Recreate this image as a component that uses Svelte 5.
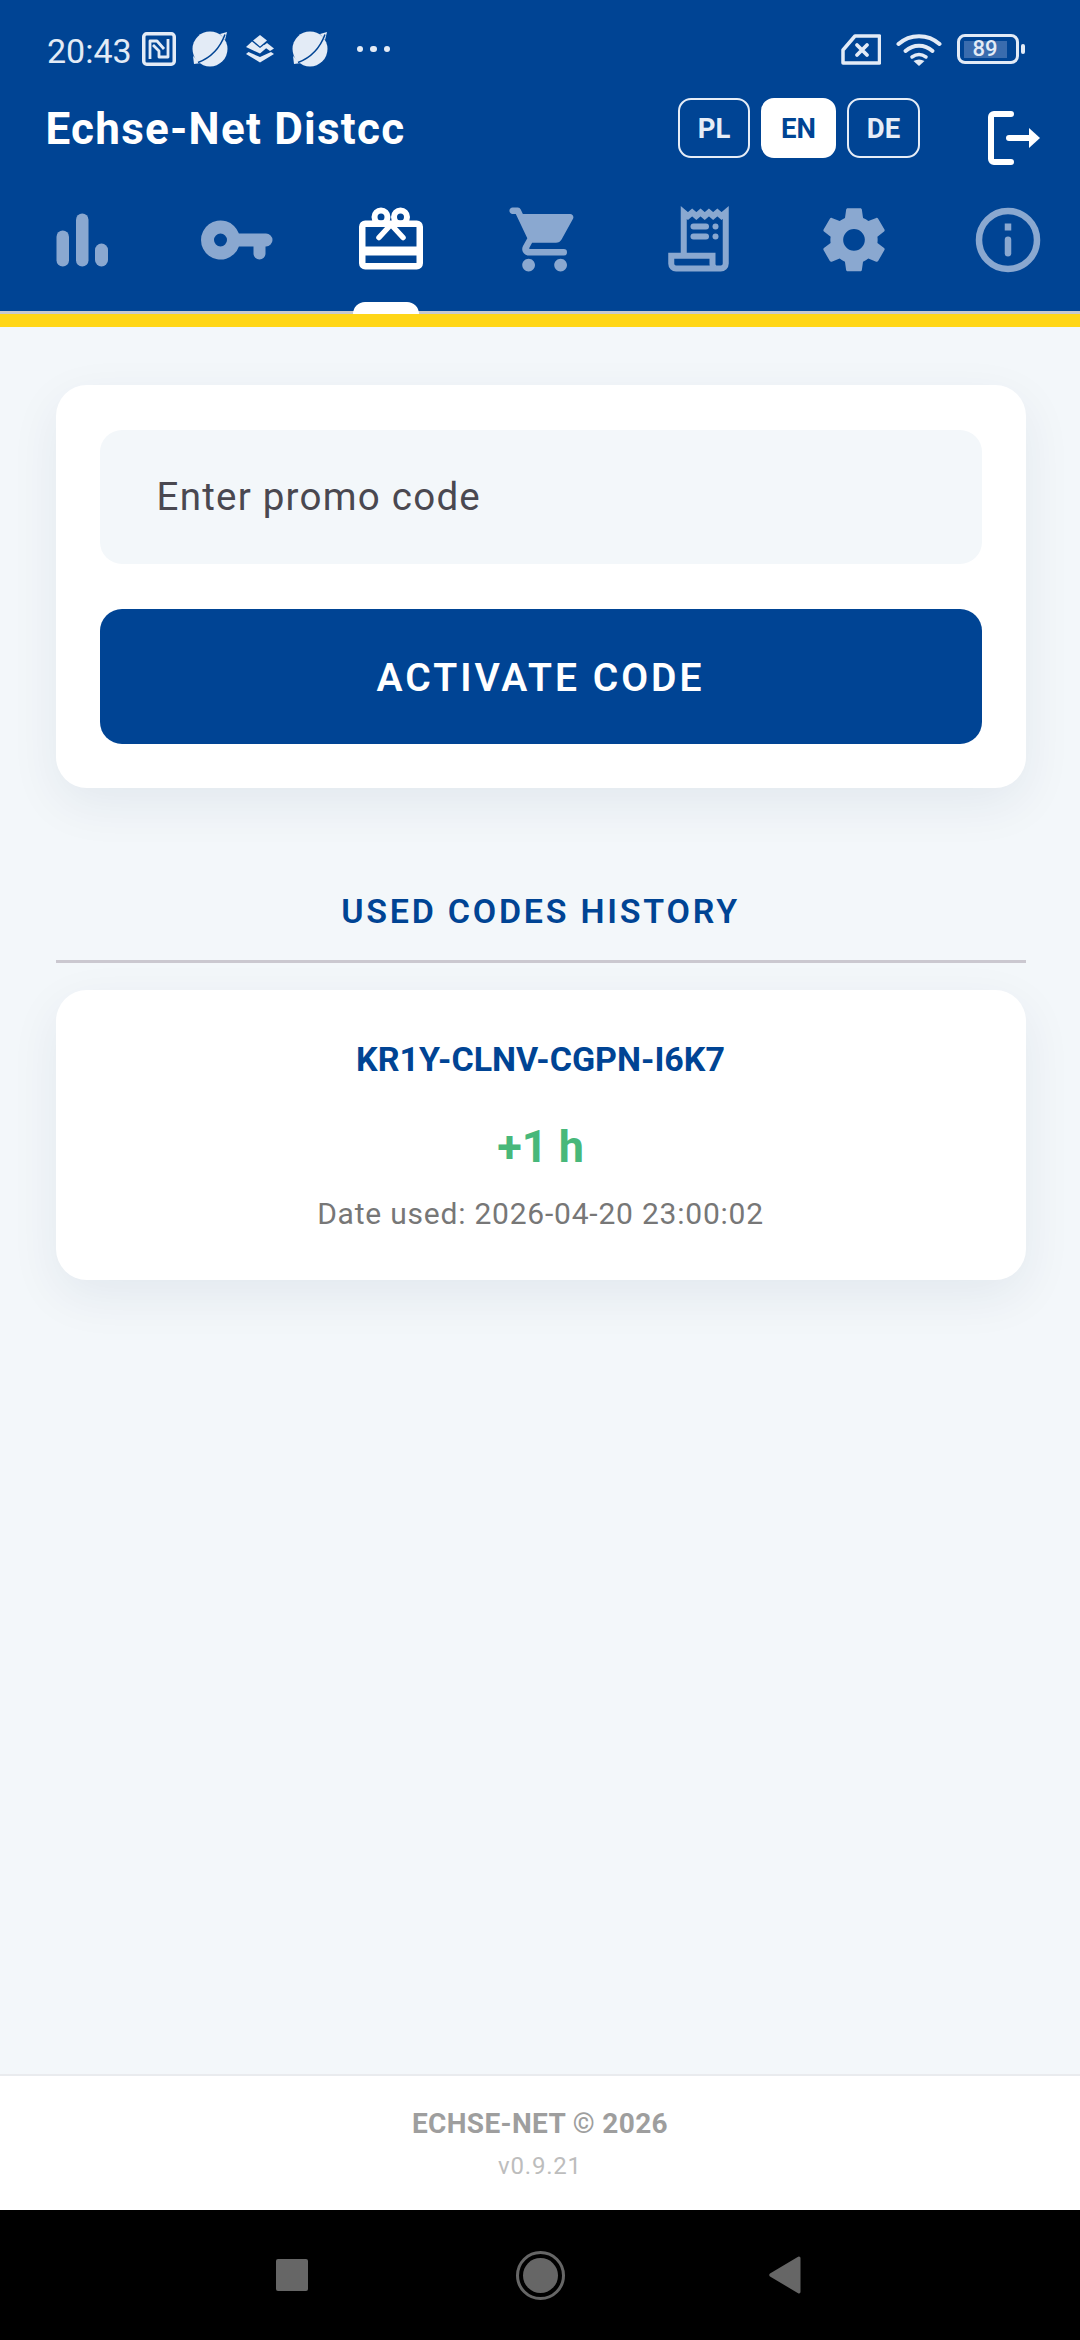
<script>
  const tabs = ['stats', 'key', 'gift', 'cart', 'receipt', 'gear', 'info'];
</script>

<div class="screen">
  <header class="top">
    <div class="status">
      <div class="status-left">
        <span class="clock">20:43</span>
        <svg class="ic nfc" viewBox="0 0 34 34"><rect x="1.750" y="1.750" width="30.500" height="30.500" rx="3" fill="none" stroke="currentColor" stroke-width="3.500"/><path d="M8 27V9h7l7 8M26 7v18h-9v-6l-6-6" fill="none" stroke="currentColor" stroke-width="2.800" stroke-linejoin="round"/></svg>
        <svg class="ic planet" viewBox="0 0 36 36"><circle cx="18" cy="18" r="17.500" fill="currentColor"/><path d="M28 3l7-2-2 8zM1 25l1 8 7-1z" fill="currentColor"/><path d="M6 31.500C18 27 28 17 33 3.500" stroke="#004494" stroke-width="1.500" fill="none"/></svg>
        <svg class="ic stack" viewBox="0 0 28 28"><path d="M14 0l7 5.500-7 6-7-6zM6 6.500l8 6.500 4-3 3 2.500-7 6-14-6.500zM0 19l2.500-2L14 22l11-5 3 2-14 8.500z" fill="currentColor"/><path d="M21 8l7 5.500-4 2.500-7-5z" fill="currentColor"/></svg>
        <svg class="ic planet second" viewBox="0 0 36 36"><circle cx="18" cy="18" r="17.500" fill="currentColor"/><path d="M28 3l7-2-2 8zM1 25l1 8 7-1z" fill="currentColor"/><path d="M6 31.500C18 27 28 17 33 3.500" stroke="#004494" stroke-width="1.500" fill="none"/></svg>
        <span class="dots"><i></i><i></i><i></i></span>
      </div>
      <div class="status-right">
        <svg class="sim" viewBox="0 0 40 31"><path d="M2 16 14 2h24.500v27H2z" fill="none" stroke="currentColor" stroke-width="3.500" stroke-linejoin="round"/><path d="M16 11l10 10M26 11 16 21" stroke="currentColor" stroke-width="3.800" stroke-linecap="round"/></svg>
        <svg class="wifi" viewBox="0 0 46 34"><path d="M2.500 12C14 1.500 32 1.500 43.500 12" fill="none" stroke="currentColor" stroke-width="4" stroke-linecap="round"/><path d="M9.500 19c8-7 19-7 27 0" fill="none" stroke="currentColor" stroke-width="4" stroke-linecap="round"/><path d="M16 25c5-3.500 9-3.500 14 0" fill="none" stroke="currentColor" stroke-width="3.500" stroke-linecap="round"/><path d="M23 34l-5.500-5q5.500-3 11 0z" fill="currentColor"/></svg>
        <div class="battery"><div class="cell"><span class="level">89</span></div><i class="nub"></i></div>
      </div>
    </div>

    <div class="titlebar">
      <h1>Echse-Net Distcc</h1>
      <div class="actions">
        <div class="langs">
          <button class="lang">PL</button>
          <button class="lang on">EN</button>
          <button class="lang">DE</button>
        </div>
        <svg class="logout" viewBox="0 0 52 54"><path d="M23 3H6a3 3 0 0 0-3 3v42a3 3 0 0 0 3 3h17" fill="none" stroke="#fff" stroke-width="6" stroke-linecap="round"/><path d="M21 27h21" stroke="#fff" stroke-width="6" stroke-linecap="round"/><path d="M41 17l11 10-11 10z" fill="#fff"/></svg>
      </div>
    </div>

    <nav class="tabs">
      {#each tabs as t}
        <div class="tab" class:active={t === 'gift'}>
          {#if t === 'stats'}
            <svg viewBox="0 0 64 64"><g fill="currentColor"><rect x="6.500" y="23" width="12.500" height="36" rx="6.250"/><rect x="26" y="6" width="12.500" height="53" rx="6.250"/><rect x="45" y="36" width="13" height="23" rx="6.500"/></g></svg>
          {:else if t === 'key'}
            <svg viewBox="0 0 64 64"><path fill="currentColor" fill-rule="evenodd" d="M33.900 26H61a6.500 6.500 0 0 1 0 13h-.5v7a6 6 0 0 1-12 0v-7H33.900A19.500 19.500 0 1 1 33.900 26zM15.500 26a6.500 6.500 0 1 0 0 13 6.500 6.500 0 0 0 0-13z"/></svg>
          {:else if t === 'gift'}
            <svg viewBox="0 0 64 64"><g fill="none" stroke="currentColor"><rect x="3.250" y="16.250" width="57.500" height="42.500" rx="3" stroke-width="6.500"/><path d="M3 43.500h58" stroke-width="9"/><circle cx="22" cy="9.500" r="6.500" stroke-width="6"/><circle cx="41.500" cy="9.500" r="6.500" stroke-width="6"/><path d="M32 17 20 30M32 17 44 30" stroke-width="5.500" stroke-linecap="round"/></g></svg>
          {:else if t === 'cart'}
            <svg viewBox="0 0 64 64"><path transform="translate(-6.800 -6.400) scale(3.200)" fill="currentColor" d="M7 18c-1.100 0-1.990.9-1.990 2S5.900 22 7 22s2-.9 2-2-.9-2-2-2zM1 3c0 .55.45 1 1 1h1l3.600 7.590-1.350 2.450c-.16.28-.25.61-.25.96 0 1.100.9 2 2 2h11a1 1 0 0 0 0-2H7.420c-.14 0-.25-.11-.25-.25l.03-.12.9-1.630h7.450c.75 0 1.410-.41 1.750-1.030l3.580-6.470c.08-.14.12-.31.12-.48 0-.55-.45-1-1-1H5.210l-.67-1.430A1 1 0 0 0 3.640 2H2c-.55 0-1 .45-1 1zm16 15c-1.100 0-1.990.9-1.990 2s.89 2 1.990 2 2-.9 2-2-.9-2-2-2z"/></svg>
          {:else if t === 'receipt'}
            <svg viewBox="0 0 64 64"><path fill="none" stroke="currentColor" stroke-width="6" stroke-linejoin="miter" d="M15.750 46V5l4.200 3.500 4.200-3.500 4.200 3.500 4.200-3.500 4.200 3.500 4.200-3.500 4.200 3.500 4.200-3.500 4.200 3.500 4.200-3.500V56a5 5 0 0 1-5 5H8a4.750 4.750 0 0 1-4.750-4.750V48.250H44.500V56a4.500 4.500 0 0 0 4.500 5"/><g fill="currentColor"><rect x="22.500" y="16" width="18.500" height="6" rx="3"/><rect x="22.500" y="26" width="18.500" height="6" rx="3"/><circle cx="47.500" cy="19" r="3"/><circle cx="47.500" cy="29" r="3"/></g></svg>
          {:else if t === 'gear'}
            <svg viewBox="2.600 2 18.800 19.800"><path fill="currentColor" fill-rule="evenodd" d="M19.140 12.940c.04-.3.06-.61.06-.94 0-.32-.02-.64-.07-.94l2.030-1.580c.18-.14.23-.41.12-.61l-1.920-3.320c-.12-.22-.37-.29-.59-.22l-2.390.96c-.5-.38-1.030-.7-1.620-.94l-.36-2.540c-.04-.24-.24-.41-.48-.41h-3.840c-.24 0-.43.17-.47.41l-.36 2.540c-.59.24-1.130.57-1.620.94l-2.390-.96c-.22-.08-.47 0-.59.22L2.740 8.870c-.12.21-.08.47.12.61l2.030 1.580c-.05.3-.09.63-.09.94s.02.64.07.94l-2.030 1.580c-.18.14-.23.41-.12.61l1.920 3.320c.12.22.37.29.59.22l2.390-.96c.5.38 1.030.7 1.620.94l.36 2.540c.05.24.24.41.48.41h3.840c.24 0 .44-.17.47-.41l.36-2.540c.59-.24 1.130-.56 1.620-.94l2.390.96c.22.08.47 0 .59-.22l1.920-3.320c.12-.22.07-.47-.12-.61l-2.010-1.580zM12 15.300a3.300 3.300 0 1 1 0-6.600 3.300 3.300 0 0 1 0 6.600z"/></svg>
          {:else}
            <svg viewBox="0 0 64 64"><circle cx="32" cy="32.500" r="29" fill="none" stroke="currentColor" stroke-width="6.500"/><rect x="28.750" y="16" width="6.500" height="7" fill="currentColor"/><rect x="28.750" y="29" width="6.500" height="20" rx="3.250" fill="currentColor"/></svg>
          {/if}
          {#if t === 'gift'}<span class="pill"></span>{/if}
        </div>
      {/each}
    </nav>
  </header>
  <div class="stripe"></div>

  <main class="content">
    <section class="card promo">
      <div class="field">Enter promo code</div>
      <button class="activate">ACTIVATE CODE</button>
    </section>

    <h2>USED CODES HISTORY</h2>
    <div class="rule"></div>

    <section class="card entry">
      <div class="code">KR1Y-CLNV-CGPN-I6K7</div>
      <div class="gain">+1 h</div>
      <div class="used">Date used: 2026-04-20 23:00:02</div>
    </section>
  </main>

  <footer class="foot">
    <div class="brand">ECHSE-NET © 2026</div>
    <div class="version">v0.9.21</div>
  </footer>

  <div class="navbar">
    <span class="square"></span>
    <span class="home"><i></i></span>
    <svg class="back" viewBox="0 0 32 38"><path d="M31.500 2v34a1.500 1.500 0 0 1-2.400 1.200L1 20.500a1.800 1.800 0 0 1 0-3L29.100.8A1.500 1.500 0 0 1 31.500 2z" fill="#666"/></svg>
  </div>
</div>

<style>
  :global(body) {
    margin: 0;
    background: #f3f7fa;
    font-family: Roboto, "Liberation Sans", sans-serif;
  }
  .screen {
    width: 1080px;
    height: 2340px;
    display: flex;
    flex-direction: column;
    overflow: hidden;
    background: #f3f7fa;
  }
  .top {
    height: 311px;
    flex: none;
    background: #004494;
    display: flex;
    flex-direction: column;
  }
  .status {
    height: 98px;
    flex: none;
    display: flex;
    justify-content: space-between;
    align-items: center;
    padding: 0 55px 0 47px;
    color: #e3ebf6;
  }
  .status-left, .status-right { display: flex; align-items: center; }
  .clock { font-size: 34px; line-height: 40px; margin-top: 3px; }
  .ic { display: block; flex: none; }
  .nfc { width: 34px; height: 34px; margin-left: 10px; }
  .planet { width: 36px; height: 36px; margin-left: 16px; }
  .stack { width: 28px; height: 28px; margin-left: 18px; }
  .planet.second { margin-left: 18px; }
  .dots { display: flex; gap: 7px; margin-left: 29px; }
  .dots i { width: 6.500px; height: 6.500px; border-radius: 50%; background: #e3ebf6; }
  .sim { width: 40px; height: 31px; display: block; }
  .wifi { width: 46px; height: 34px; margin-left: 15px; display: block; }
  .battery { display: flex; align-items: center; margin-left: 15px; }
  .cell {
    width: 62px; height: 30px; box-sizing: border-box;
    border: 3.500px solid #e3ebf6; border-radius: 8px;
    padding: 3.500px; display: flex;
  }
  .level {
    width: 43px; background: #3a6cae; color: #e3ebf6;
    font-size: 22px; font-weight: 500; line-height: 16px; text-align: center;
  }
  .nub { width: 4px; height: 10px; margin-left: 2px; background: #e3ebf6; border-radius: 2px; }
  .titlebar {
    height: 60px;
    flex: none;
    display: flex;
    justify-content: space-between;
    align-items: center;
    padding: 0 40px 0 45.500px;
  }
  h1 { margin: 2px 0 0; color: #fff; font-size: 44px; font-weight: 700; letter-spacing: 1.250px; line-height: 48px; }
  .actions { display: flex; align-items: center; }
  .langs { display: flex; gap: 11px; }
  .lang {
    height: 60px; width: 72px; padding: 0;
    border: 2.500px solid #e6edf7; border-radius: 13px; background: transparent;
    color: #e6edf7; font: 700 27.500px Roboto, sans-serif;
  }
  .lang.on { width: 75px; background: #fff; border-color: #fff; color: #004494; }
  .lang:last-child { width: 73px; }
  .logout { width: 52px; height: 54px; margin-left: 68px; margin-top: 20px; display: block; }
  .tabs {
    flex: 1;
    display: flex;
  }
  .tab {
    flex: 1; position: relative; color: #8aa8d0;
    display: flex; justify-content: center;
    padding: 49px 0 0 10.500px; box-sizing: border-box;
  }
  .tab svg { width: 64px; height: 65px; display: block; overflow: visible; }
  .tab.active { color: #fff; }
  .pill {
    position: absolute; bottom: -3px; left: 50%; margin-left: -33px;
    width: 66px; height: 12px; background: #fff; border-radius: 12px 12px 0 0;
  }
  .stripe { height: 16px; flex: none; background: #ffd617; border-top: 3px solid #c6c9d0; box-sizing: border-box; }
  .content {
    flex: 1;
    padding: 58px 54.500px 0 55.500px;
    display: flex;
    flex-direction: column;
  }
  .card {
    background: #fff;
    border-radius: 31px;
    box-shadow: 0 16px 50px rgba(0, 40, 90, 0.07);
    box-sizing: border-box;
    flex: none;
  }
  .promo { height: 403px; padding: 45px 44px; display: flex; flex-direction: column; gap: 45px; }
  .field {
    height: 132px; flex: none; background: #f3f7fa; border-radius: 22px;
    display: flex; align-items: center; padding: 0 0 2px 57px;
    color: #4a4850; font-size: 38.500px; letter-spacing: 1.250px;
  }
  .activate {
    height: 135px; flex: none; background: #004494; border: 0; border-radius: 22px;
    color: #fff; font: 600 39px Roboto, sans-serif; letter-spacing: 3px; padding: 2px 0 0;
  }
  h2 {
    margin: 103px 0 0; text-align: center; color: #004494;
    font-size: 34px; font-weight: 600; letter-spacing: 2.750px; line-height: 40px;
  }
  .rule { height: 3px; background: #cbc8d0; margin-top: 29px; flex: none; }
  .entry { height: 290px; margin-top: 27px; padding-top: 49px; text-align: center; }
  .code { color: #004494; font-size: 34px; font-weight: 700; line-height: 40px; }
  .gain { color: #48b87a; font-size: 45px; font-weight: 700; line-height: 50px; margin-top: 43px; }
  .used { color: #777; font-size: 30px; line-height: 36px; margin-top: 24px; letter-spacing: .780px; }
  .foot {
    height: 136px; flex: none; box-sizing: border-box; background: #fff;
    border-top: 2px solid #e9ebee; text-align: center; padding-top: 32px;
  }
  .brand { color: #9e9e9e; font-size: 28px; font-weight: 700; line-height: 32px; letter-spacing: .350px; }
  .version { color: #bdbdbd; font-size: 24px; line-height: 28px; margin-top: 12px; letter-spacing: .800px; }
  .navbar { height: 130px; flex: none; background: #000; display: flex; align-items: center; }
  .square { width: 32px; height: 32px; background: #666; border-radius: 2px; margin-left: 276px; }
  .home { width: 49px; height: 49px; margin-left: 208px; border: 3px solid #666; border-radius: 50%; box-sizing: border-box; padding: 4px; display: block; }
  .home i { display: block; width: 35px; height: 35px; background: #666; border-radius: 50%; }
  .back { width: 32px; height: 38px; margin-left: 204px; display: block; }
</style>
